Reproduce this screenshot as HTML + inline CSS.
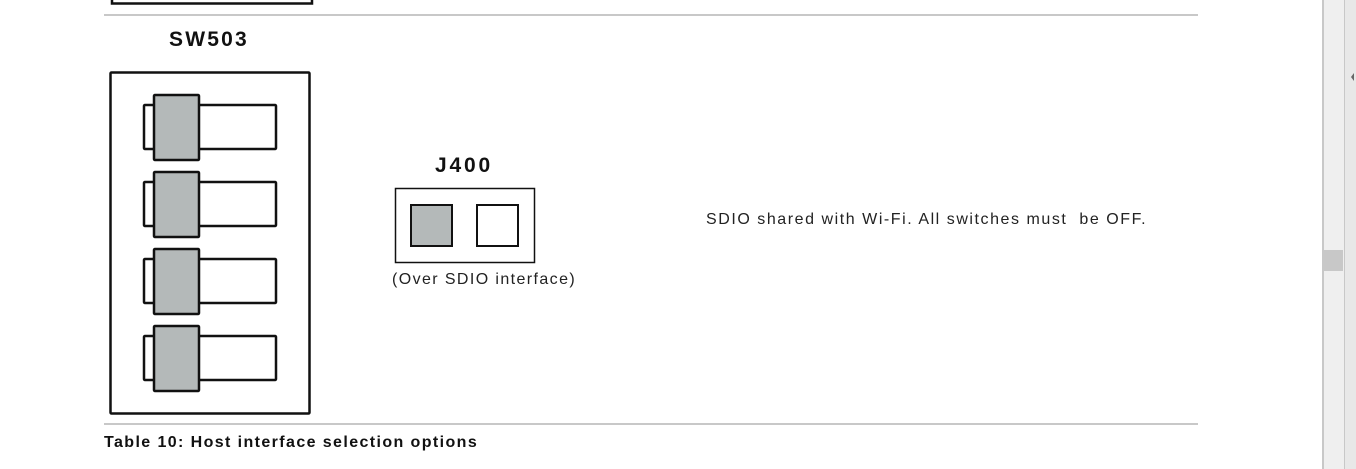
<!DOCTYPE html>
<html><head><style>
html,body{margin:0;padding:0;background:#fff;width:1356px;height:469px;overflow:hidden;font-family:"Liberation Sans",sans-serif;}
.t{position:absolute;color:#111;white-space:nowrap}
</style></head><body>
<div style="position:absolute;left:1322px;top:0;width:2px;height:469px;background:#c8c8c8"></div>
<div style="position:absolute;left:1324px;top:0;width:20px;height:469px;background:#efefef"></div>
<div style="position:absolute;left:1344px;top:0;width:1px;height:469px;background:#c8c8c8"></div>
<div style="position:absolute;left:1345px;top:0;width:11px;height:469px;background:#e8e8e8"></div>
<div style="position:absolute;left:1324px;top:250px;width:19px;height:21px;background:#c8c8c8"></div>
<svg style="position:absolute;left:0;top:0" width="1356" height="469">
<polygon points="1351,77 1354,73 1354,81" fill="#666"/>
<rect x="104" y="14" width="1094" height="2" fill="#c8c8c8"/>
<rect x="104" y="423" width="1094" height="2" fill="#c8c8c8"/>
<path d="M112,-5 V3.5 H312 V-5" fill="none" stroke="#111" stroke-width="2.5"/>
<rect x="110.5" y="72.5" width="199" height="341" fill="#fff" stroke="#111" stroke-width="2.5" rx="1"/>
<g fill="#fff" stroke="#111" stroke-width="2.5">
<rect x="144" y="105" width="132" height="44" rx="1"/>
<rect x="144" y="182" width="132" height="44" rx="1"/>
<rect x="144" y="259" width="132" height="44" rx="1"/>
<rect x="144" y="336" width="132" height="44" rx="1"/>
</g>
<g fill="#b4b9b9" stroke="#111" stroke-width="2.5">
<rect x="154" y="95" width="45" height="65" rx="1"/>
<rect x="154" y="172" width="45" height="65" rx="1"/>
<rect x="154" y="249" width="45" height="65" rx="1"/>
<rect x="154" y="326" width="45" height="65" rx="1"/>
</g>
<rect x="395.5" y="188.5" width="139" height="74" fill="#fff" stroke="#111" stroke-width="1.5"/>
<rect x="411" y="205" width="41" height="41" fill="#b4b9b9" stroke="#111" stroke-width="2"/>
<rect x="477" y="205" width="41" height="41" fill="#fff" stroke="#111" stroke-width="2"/>
</svg>
<div class="t" style="left:169px;top:28px;font-size:21px;font-weight:bold;letter-spacing:2.2px">SW503</div>
<div class="t" style="left:435px;top:154px;font-size:21px;font-weight:bold;letter-spacing:2.8px">J400</div>
<div class="t" style="left:392px;top:271px;font-size:16px;color:#222;letter-spacing:1.4px">(Over SDIO interface)</div>
<div class="t" style="left:706px;top:211px;font-size:16px;color:#222;letter-spacing:1.55px">SDIO shared with Wi-Fi. All switches must&nbsp; be OFF.</div>
<div class="t" style="left:104px;top:434px;font-size:16px;font-weight:bold;letter-spacing:1.4px">Table 10: Host interface selection options</div>
</body></html>
